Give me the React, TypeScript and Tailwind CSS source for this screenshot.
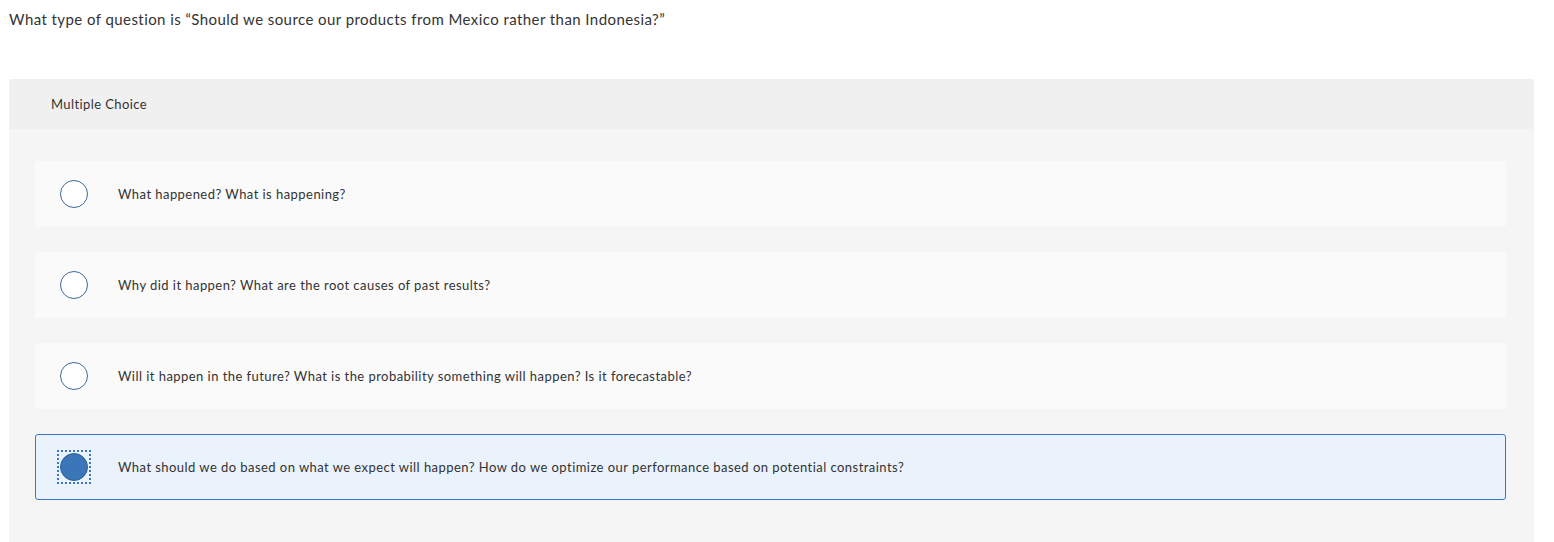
const OPTIONS = [
  "What happened? What is happening?",
  "Why did it happen? What are the root causes of past results?",
  "Will it happen in the future? What is the probability something will happen? Is it forecastable?",
  "What should we do based on what we expect will happen? How do we optimize our performance based on potential constraints?",
];

const SELECTED = 3;

export default function App() {
  return (
    <div className="min-h-[542px] bg-white text-[#333] font-['Lato','Open_Sans',sans-serif]">
      <div className="px-[9px] pt-[10px] text-[15px] leading-[18px] tracking-[0.43px]">
        What type of question is “Should we source our products from Mexico rather than Indonesia?”
      </div>

      <div className="mx-[9px] mt-[51px] rounded-t-[3px] bg-[#f5f5f5] h-[463px] w-[1525px]">
        <div className="h-[50px] flex items-center px-[42px] pt-[2px] bg-[#f0f0f0] rounded-t-[3px] text-[13px] tracking-[0.4px]">
          Multiple Choice
        </div>

        <div className="flex flex-col gap-[25px] pt-[32px] pl-[26px] pr-[28px]">
          {OPTIONS.map((text, i) => {
            const selected = i === SELECTED;
            return (
              <div
                key={i}
                className={
                  selected
                    ? "h-[66px] flex items-center rounded-[3px] border border-[#3b78c4] bg-[#eaf2fb] pl-[21px]"
                    : "h-[66px] flex items-center rounded-[3px] border border-transparent bg-[#fafafa] pl-[21px]"
                }
              >
                <div
                  className={
                    selected
                      ? "w-[34px] h-[34px] flex items-center justify-center outline-2 outline-dotted outline-[#3b78c4] -outline-offset-2"
                      : "w-[34px] h-[34px] flex items-center justify-center"
                  }
                >
                  {selected ? (
                    <div className="w-[28px] h-[28px] rounded-full bg-[#3a76b8] border border-[#2d5f96]" />
                  ) : (
                    <div className="w-[28px] h-[28px] rounded-full bg-white border-[1.5px] border-[#3d6a9a]" />
                  )}
                </div>
                <div className="ml-[27px] pt-[1px] text-[13px] tracking-[0.45px]">{text}</div>
              </div>
            );
          })}
        </div>
      </div>
    </div>
  );
}
